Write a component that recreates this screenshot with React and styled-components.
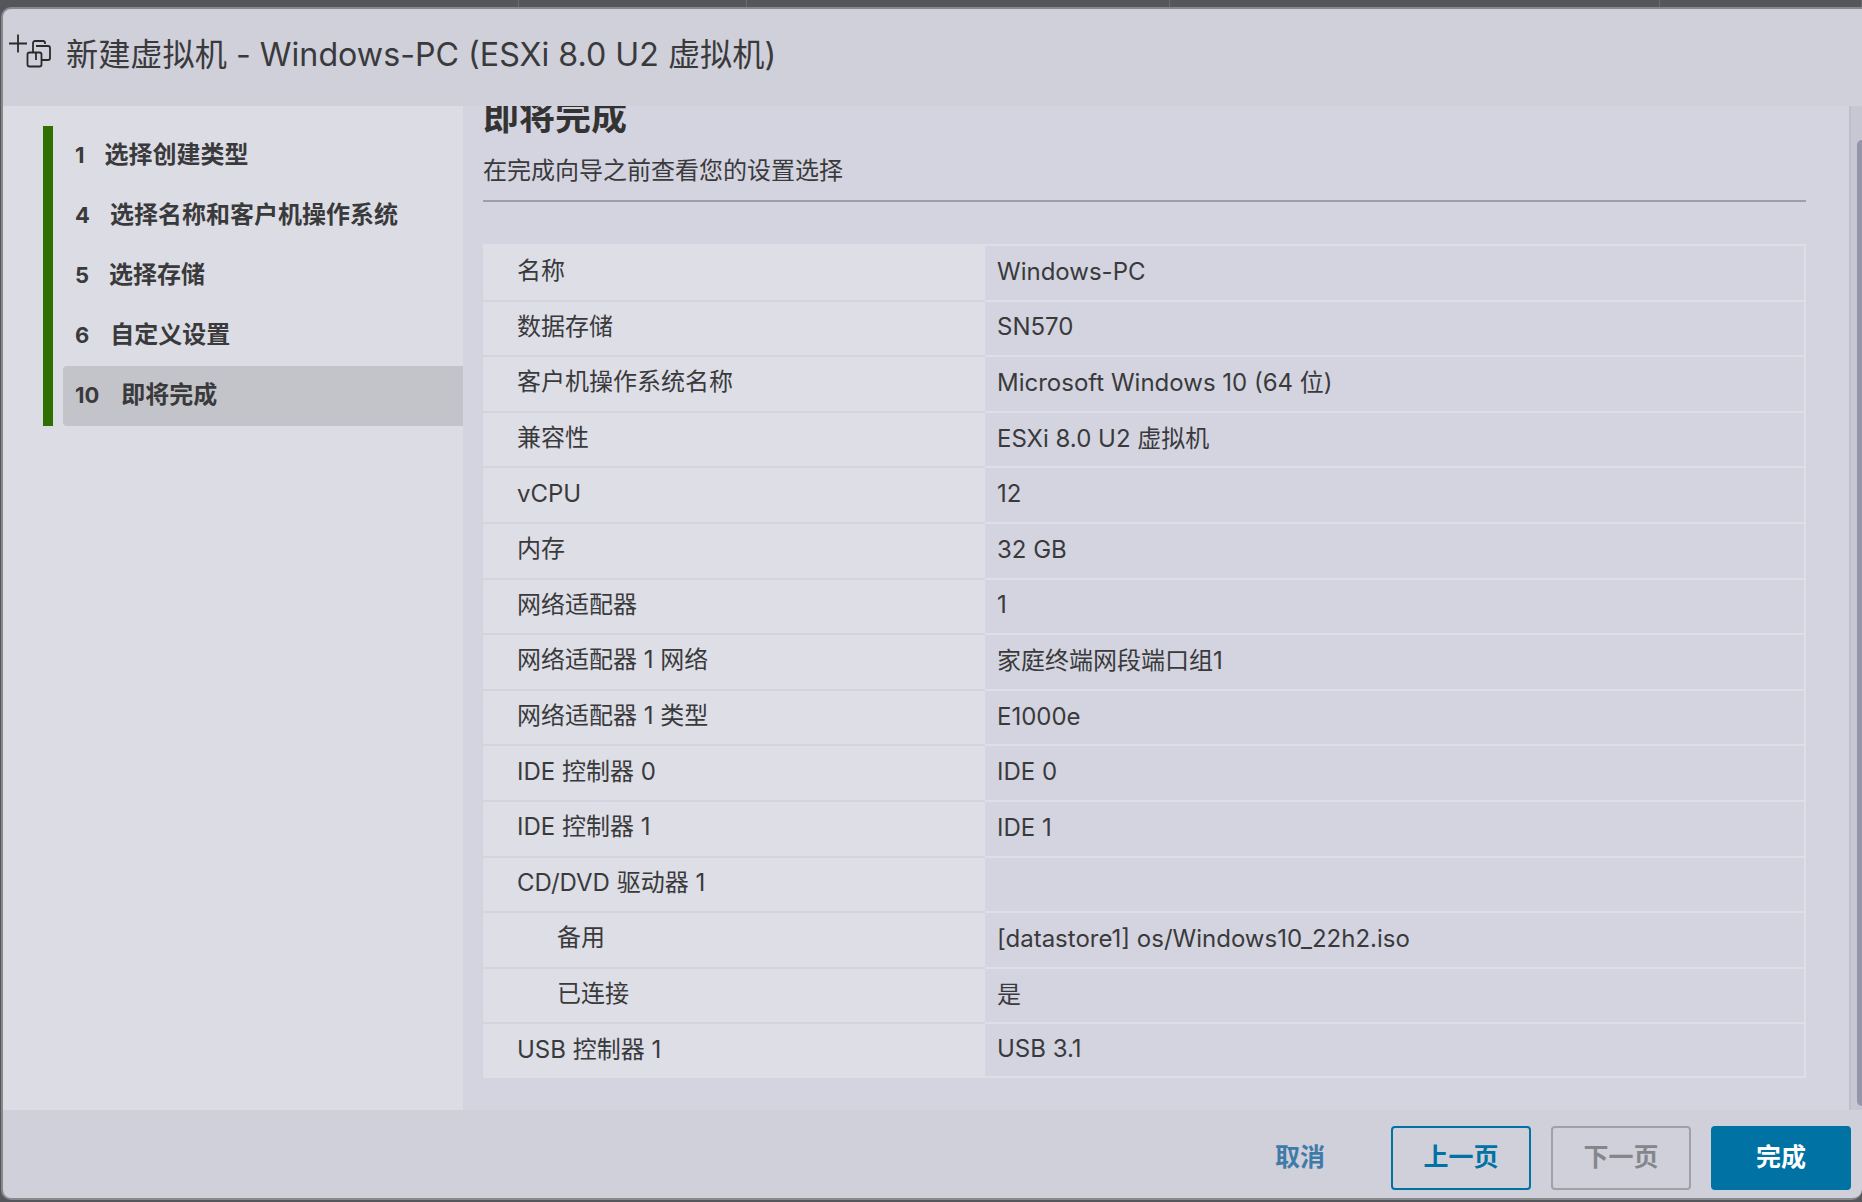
import React from "react";
import styled, { createGlobalStyle } from "styled-components";

const FONT = `Inter, "Noto Sans CJK SC", sans-serif`;

const Global = createGlobalStyle`
  html, body {
    margin: 0;
    padding: 0;
    background: #55565b;
    overflow: hidden;
  }
  * {
    box-sizing: border-box;
  }
`;

const Page = styled.div`
  width: 1862px;
  height: 1202px;
  background: #55565b;
  font-family: ${FONT};
  color: #333;
`;
const BackdropRow = styled.div`
  height: 7px;
  display: flex;
`;
const BackdropCell = styled.div`
  width: ${p => p.$w}px;
  flex: none;
  border-right: 1px solid #6a6b70;
`;
const Modal = styled.div`
  width: 1861px;
  height: 1193px;
  margin-left: 1px;
  background: #cfd0da;
  border: 2px solid #87888c;
  border-right: 0;
  border-radius: 10px 0 10px 10px;
  display: flex;
  flex-direction: column;
  overflow: hidden;
`;
const Header = styled.div`
  height: 97px;
  flex: none;
  display: flex;
  align-items: flex-start;
  padding: 25px 0 0 5px;
`;
const Title = styled.div`
  font-size: 32.2px;
  line-height: 40px;
  margin: 1px 0 0 14px;
  color: #3a3a3c;
  white-space: nowrap;
`;
const Body = styled.div`
  flex: 1;
  display: flex;
  min-height: 0;
`;
const Sidebar = styled.div`
  width: 460px;
  flex: none;
  background: #dcdde4;
  padding: 20px 0 0 40px;
`;
const Steps = styled.div`
  border-left: 10px solid #2f6f00;
`;
const Step = styled.div`
  height: 60px;
  margin-left: ${p => (p.$active ? "10px" : "0")};
  padding: 0 0 2px ${p => (p.$active ? "12px" : "22px")};
  display: flex;
  align-items: center;
  font-size: 24px;
  line-height: 30px;
  font-weight: 700;
  color: #3a3a3c;
  background: ${p => (p.$active ? "#c3c4c9" : "transparent")};
  border-radius: ${p => (p.$active ? "4px 0 0 4px" : "0")};
`;
const StepNum = styled.span`
  margin-right: ${p => p.$gap}px;
  font-size: 22px;
`;
const Main = styled.div`
  flex: 1;
  min-width: 0;
  background: #d3d4df;
  padding: 0 56px 0 20px;
  overflow: hidden;
  position: relative;
`;
const Heading = styled.h2`
  margin: -11px 0 0;
  font-size: 36px;
  line-height: 44px;
  font-weight: 700;
  color: #333;
`;
const Sub = styled.div`
  margin-top: 17px;
  font-size: 24px;
  line-height: 30px;
  color: #3a3a3c;
`;
const Rule = styled.div`
  height: 2px;
  margin-top: 14px;
  background: #9d9eab;
`;
const Table = styled.div`
  margin-top: 42px;
  display: grid;
  grid-template-columns: 502px 1fr;
  grid-auto-rows: 55.6px;
  border-right: 2px solid #dddee6;
`;
const Label = styled.div`
  background: #dddee6;
  border-top: 2px solid #d3d4df;
  padding: 0 0 3px ${p => (p.$sub ? "74px" : "34px")};
  display: flex;
  align-items: center;
  font-size: 24px;
  line-height: 30px;
  color: #3a3a3c;
  &:first-child {
    border-top-color: #dddee6;
  }
`;
const Value = styled.div`
  border-top: 2px solid #dddee6;
  padding: 0 0 2px 12px;
  display: flex;
  align-items: center;
  font-size: 24px;
  line-height: 30px;
  color: #3a3a3c;
  &:last-child {
    border-bottom: 2px solid #dddee6;
  }
`;
const Scrollbar = styled.div`
  position: absolute;
  top: 0;
  right: 0;
  bottom: 0;
  width: 13px;
  background: #c6c7d2;
  border-left: 2px solid #bebfca;
`;
const Thumb = styled.div`
  position: absolute;
  top: 34px;
  right: 0;
  bottom: 4px;
  width: 5px;
  background: #9595ac;
  border-radius: 5px 0 0 5px;
`;
const Footer = styled.div`
  height: 88px;
  flex: none;
  display: flex;
  align-items: flex-start;
  justify-content: flex-end;
  padding: 16px 11px 0 0;
  gap: 20px;
`;
const Button = styled.button`
  width: 140px;
  height: 64px;
  padding: 0 0 6px;
  border-radius: 4px;
  font-family: ${FONT};
  font-size: 25px;
  font-weight: 700;
  border: 2px solid ${p => (p.$primary ? "#0072a3" : p.$disabled ? "#a0a1a8" : "#0072a3")};
  background: ${p => (p.$primary ? "#0072a3" : "transparent")};
  color: ${p => (p.$primary ? "#fff" : p.$disabled ? "#85868c" : "#0072a3")};
`;
const Cancel = styled.button`
  width: 128px;
  height: 64px;
  margin-right: 0;
  padding: 0 14px 6px 0;
  border: 0;
  background: none;
  font-family: ${FONT};
  font-size: 25px;
  font-weight: 700;
  color: #3f7ba8;
`;

const steps = [
  ["1", "选择创建类型", 20],
  ["4", "选择名称和客户机操作系统", 20],
  ["5", "选择存储", 20],
  ["6", "自定义设置", 21],
  ["10", "即将完成", 22],
];

const rows = [
  ["名称", "Windows-PC"],
  ["数据存储", "SN570"],
  ["客户机操作系统名称", "Microsoft Windows 10 (64 位)"],
  ["兼容性", "ESXi 8.0 U2 虚拟机"],
  ["vCPU", "12"],
  ["内存", "32 GB"],
  ["网络适配器", "1"],
  ["网络适配器 1 网络", "家庭终端网段端口组1"],
  ["网络适配器 1 类型", "E1000e"],
  ["IDE 控制器 0", "IDE 0"],
  ["IDE 控制器 1", "IDE 1"],
  ["CD/DVD 驱动器 1", ""],
  ["备用", "[datastore1] os/Windows10_22h2.iso", true],
  ["已连接", "是", true],
  ["USB 控制器 1", "USB 3.1"],
];

const backdropCells = [519, 228, 423, 490, 202];

function VmIcon() {
  return (
    <svg width="44" height="34" viewBox="0 0 44 34" fill="none" stroke="#2a2a2c" strokeWidth="1.8">
      <path d="M1 9.5h18M10 0.5v18" />
      <rect x="19.5" y="18.5" width="14" height="14" rx="2" />
      <path d="M25 18v-9a2 2 0 0 1 2-2h8a2 2 0 0 1 2 2v1M28 12h12a2 2 0 0 1 2 2v10a2 2 0 0 1-2 2h-6M28 18v8" />
    </svg>
  );
}

export default function App() {
  return (
    <Page>
      <Global />
      <BackdropRow>
        {backdropCells.map((w, i) => (
          <BackdropCell key={i} $w={w} />
        ))}
      </BackdropRow>
      <Modal>
        <Header>
          <VmIcon />
          <Title>新建虚拟机 - Windows-PC (ESXi 8.0 U2 虚拟机)</Title>
        </Header>
        <Body>
          <Sidebar>
            <Steps>
              {steps.map(([num, text, gap], i) => (
                <Step key={num} $active={i === steps.length - 1}>
                  <StepNum $gap={gap}>{num}</StepNum>
                  {text}
                </Step>
              ))}
            </Steps>
          </Sidebar>
          <Main>
            <Heading>即将完成</Heading>
            <Sub>在完成向导之前查看您的设置选择</Sub>
            <Rule />
            <Table>
              {rows.map(([label, value, sub]) => (
                <React.Fragment key={label}>
                  <Label $sub={sub}>{label}</Label>
                  <Value>{value}</Value>
                </React.Fragment>
              ))}
            </Table>
            <Scrollbar>
              <Thumb />
            </Scrollbar>
          </Main>
        </Body>
        <Footer>
          <Cancel>取消</Cancel>
          <Button>上一页</Button>
          <Button $disabled>下一页</Button>
          <Button $primary>完成</Button>
        </Footer>
      </Modal>
    </Page>
  );
}
